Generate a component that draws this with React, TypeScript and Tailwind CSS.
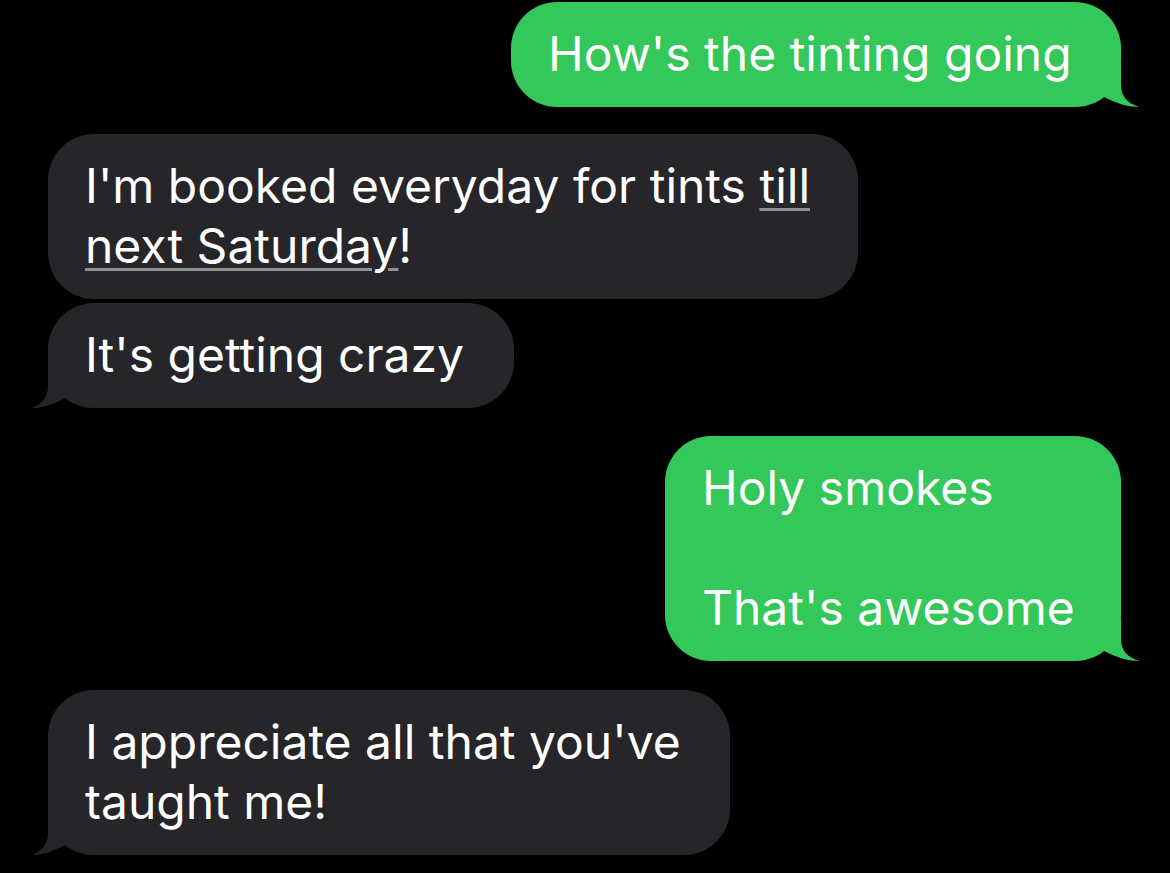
import React from "react";

const GREEN = "#34c759";
const GRAY = "#262529";

function TailLeft({ color }: { color: string }) {
  return (
    <svg
      className="absolute left-[-16px] bottom-0"
      width="72"
      height="42"
      viewBox="0 0 72 42"
    >
      <path
        d="M16 0 L16 20 C16 31 10 38 0 42 C9 42 20 39 33 32 C40 38 50 42 72 42 L72 0 Z"
        fill={color}
      />
    </svg>
  );
}

function TailRight({ color }: { color: string }) {
  return (
    <svg
      className="absolute right-[-18px] bottom-0"
      width="74"
      height="42"
      viewBox="0 0 74 42"
    >
      <path
        d="M56 0 L56 20 C56 31 62 38 74 42 C64 42 53 39 39 32 C32 38 22 42 0 42 L0 0 Z"
        fill={color}
      />
    </svg>
  );
}

function Bubble({
  side,
  width,
  tail,
  children,
}: {
  side: "left" | "right";
  width: string;
  tail: boolean;
  children: React.ReactNode;
}) {
  const color = side === "right" ? GREEN : GRAY;
  return (
    <div
      className={`relative ${width} rounded-[46px] ${
        side === "right" ? "bg-[#34c759] self-end" : "bg-[#262529] self-start"
      } pl-[37px] pr-[40px] pt-[22px] pb-[23px] text-white text-[48px] leading-[60px] tracking-[0px] whitespace-nowrap`}
    >
      {tail && (side === "right" ? <TailRight color={color} /> : <TailLeft color={color} />)}
      <div className="relative">{children}</div>
    </div>
  );
}

export default function App() {
  const ul =
    "underline decoration-[#8e8e93] decoration-[3px] underline-offset-[5px]";
  return (
    <div
      className="w-[1170px] h-[873px] bg-black overflow-hidden flex flex-col pt-[2px] pl-[48px] pr-[49px]"
      style={{ fontFamily: "Inter, 'Noto Sans', sans-serif" }}
    >
      <Bubble side="right" width="w-[610px]" tail>
        How's the tinting going
      </Bubble>
      <div className="h-[27px]" />
      <Bubble side="left" width="w-[810px]" tail={false}>
        I'm booked everyday for tints <span className={ul}>till</span>
        <br />
        <span className={ul}>next Saturday</span>!
      </Bubble>
      <div className="h-[4px]" />
      <Bubble side="left" width="w-[466px]" tail>
        It's getting crazy
      </Bubble>
      <div className="h-[28px]" />
      <Bubble side="right" width="w-[456px]" tail>
        Holy smokes
        <br />
        <br />
        That's awesome
      </Bubble>
      <div className="h-[29px]" />
      <Bubble side="left" width="w-[682px]" tail>
        I appreciate all that you've
        <br />
        taught me!
      </Bubble>
    </div>
  );
}
